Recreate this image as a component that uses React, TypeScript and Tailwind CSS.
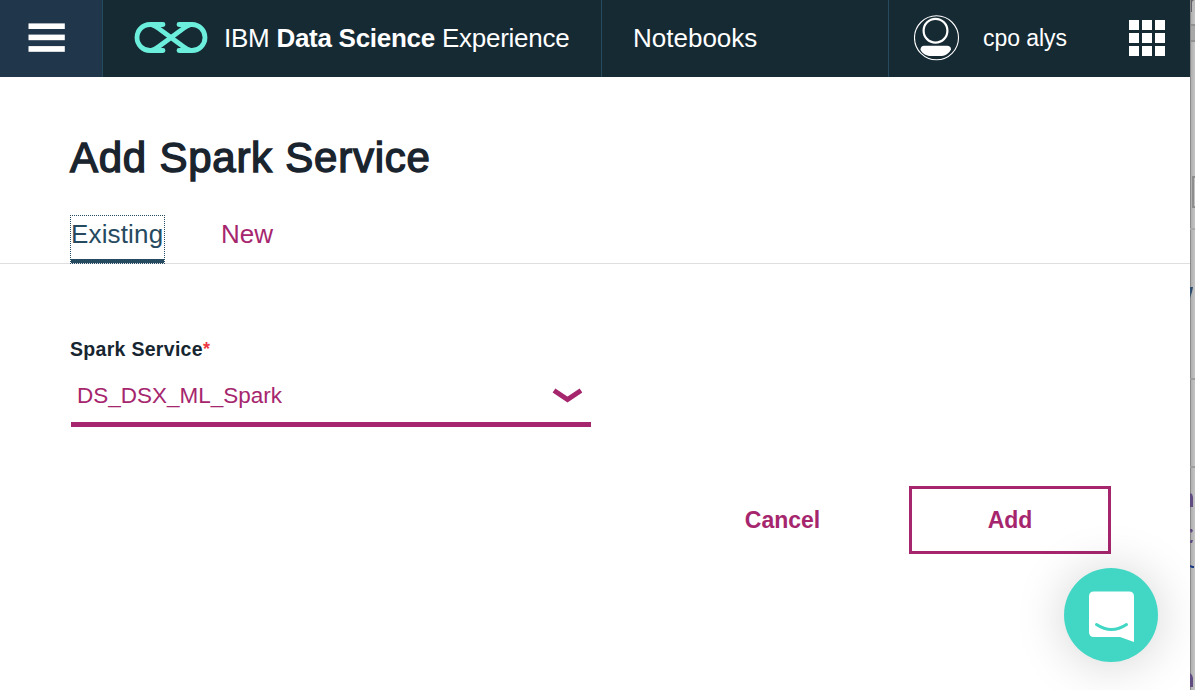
import React from "react";

function MenuIcon() {
  return (
    <svg width="37" height="30" viewBox="0 0 37 30" fill="#fff">
      <rect x="0.5" y="0.4" width="36.3" height="5.6" />
      <rect x="0.5" y="11.6" width="36.3" height="5.6" />
      <rect x="0.5" y="23.1" width="36.3" height="5.7" />
    </svg>
  );
}

function Logo() {
  return (
    <svg width="74" height="32" viewBox="0 0 74 32" fill="none" stroke="#6beedb" strokeWidth="4.8" strokeLinecap="round">
      <path d="M29 2.5H16a13 13 0 0 0 0 26H29" />
      <path d="M45 2.5H58a13 13 0 0 1 0 26H45" />
      <path d="M18 2.8c2.500 0.500 4.500 2 6.500 3.500L49.500 24.700c2 1.500 4 3 6.500 3.500" />
      <path d="M56 2.8c-2.500 0.500-4.500 2-6.500 3.500L24.500 24.700c-2 1.500-4 3-6.500 3.500" />
    </svg>
  );
}

function Avatar() {
  return (
    <svg width="46" height="46" viewBox="0 0 46 46" fill="none">
      <circle cx="22.500" cy="22.800" r="22" stroke="#fff" strokeWidth="1.100" />
      <circle cx="21.500" cy="15.700" r="11.900" stroke="#fff" strokeWidth="2.200" />
      <path fill="#fff" d="M10 30.700H33C35.500 30.700 37 32 37 34.300C36 37 32.500 41 27.500 41H17C12 41 8 38 6.500 34.700C6.500 32 8 30.700 10 30.700Z" />
    </svg>
  );
}

function AppsIcon() {
  return (
    <div className="grid grid-cols-3 gap-[3px]">
      {Array.from({ length: 9 }, (_, i) => (
        <span key={i} className="size-[10px] bg-white" />
      ))}
    </div>
  );
}

function Header() {
  return (
    <header className="flex h-[77px] bg-[#162a34] text-[26px] leading-none text-white">
      <button className="flex w-[103px] items-start border-r border-[#264a60] bg-[#20364b] pt-[23px] pl-7">
        <MenuIcon />
      </button>
      <div className="flex w-[499px] items-center border-r border-[#264a60] pb-[2px] pl-[31px]">
        <Logo />
        <div className="ml-[16px] whitespace-pre tracking-[-0.27px]">
          IBM <span className="font-bold">Data Science</span> Experience
        </div>
      </div>
      <div className="flex w-[287px] items-center border-r border-[#264a60] pb-[2px] pl-[31px]">Notebooks</div>
      <div className="flex flex-1 items-center pb-[2px] pl-[25px]">
        <Avatar />
        <span className="ml-[23px] w-[146px] pt-[2px] text-[23px] tracking-[-0.05px]">cpo alys</span>
        <AppsIcon />
      </div>
    </header>
  );
}

function Tabs() {
  return (
    <nav className="flex h-[49px] border-b border-[#dfdfdf] pl-[70px] text-[26px]">
      <a className="flex h-[49px] w-[95px] flex-col justify-between border border-dotted border-[#264a60] text-[#264a60]">
        <span className="leading-[36px] tracking-[0.15px]">Existing</span>
        <span className="h-1 bg-[#264a60]" />
      </a>
      <a className="ml-[56px] pt-[1px] leading-[36px] text-[#a6266e]">New</a>
    </nav>
  );
}

function ChatLauncher() {
  return (
    <button className="absolute top-[568px] left-[1064px] flex size-[94px] items-start rounded-full bg-[#42d7c5] pt-[23px] pl-[25px] shadow-[0_2px_50px_rgba(0,0,0,0.18)]">
      <svg width="46" height="52" viewBox="0 0 46 52">
        <path fill="#fff" d="M5 0.500H40Q45 0.500 45 5.500V51L31 46H5Q0 46 0 41V5.500Q0 0.500 5 0.500Z" />
        <path d="M7.500 33.500Q22.500 43.500 37.500 33.500" fill="none" stroke="#42d7c5" strokeWidth="3" strokeLinecap="round" />
      </svg>
    </button>
  );
}

function WindowBehind() {
  return (
    <aside className="relative h-[690px] w-[5px] overflow-hidden bg-linear-to-r from-[#aaa] to-[#c5c5c5]">
      <div className="h-3 bg-[#606168] pl-[2px]">
        <div className="h-3 rounded-tl bg-[#bcbcbc]" />
      </div>
      <div className="h-3" />
      <div className="h-[18px] border-y-2 border-[#929292] bg-[#a8a8a8]" />
      <div className="absolute top-0 left-0 h-[690px] w-px bg-[#8a8a8a]" />
      <div className="absolute top-[176px] left-[2px] h-[32px] w-2 border-2 border-[#8e8e8e]" />
      <div className="absolute top-[228px] h-[2px] w-full bg-[#aaa]" />
      <div className="absolute top-[378px] h-[2px] w-full bg-[#9e9e9e]" />
      <div className="absolute top-[466px] h-[2px] w-full bg-[#9e9e9e]" />
      <svg className="absolute inset-0" width="5" height="690" viewBox="0 0 5 690">
        <path fill="#304e70" d="M0 287H3L2 292L0 298Z" />
        <path fill="#614c82" d="M0 493L2 494L3 497V507H0ZM0 529H2L3 531L1 533L0 531ZM0 541L1 540H3L2 543H0ZM0 673L2 675L3 678V687H0Z" />
        <path fill="#1c3c86" d="M0 565L3 566H4V568H2L0 567Z" />
      </svg>
    </aside>
  );
}

export default function App() {
  return (
    <div className="relative flex h-[690px] w-[1195px] overflow-hidden bg-white font-['Liberation_Sans',Arial,sans-serif]">
      <div className="relative h-[690px] w-[1190px] overflow-hidden">
        <Header />
        <main>
          <h1 className="pt-[57px] pl-[70px] text-[42px] leading-[48px] tracking-[0.75px] text-[#1a242e] [-webkit-text-stroke:1.4px_#1a242e]">
            Add Spark Service
          </h1>
          <div className="mt-[33px]">
            <Tabs />
          </div>
          <form className="pt-[73px] pl-[70px]">
            <label className="flex text-[19.5px] leading-[24px] font-bold tracking-[0.3px] text-[#162530]">
              Spark Service<span className="text-[18px] text-[#ed3742]">*</span>
            </label>
            <div className="mt-[21px] ml-[1px] flex h-[45px] w-[520px] justify-between border-b-5 border-[#a6266e] pr-[9px] pl-[6px] text-[22.5px] leading-[28px] text-[#a6266e]">
              <span>DS_DSX_ML_Spark</span>
              <svg className="mt-[4px]" width="30" height="18" viewBox="0 0 30 18" fill="none" stroke="#a6266e" strokeWidth="5">
                <path d="M2 4.500L15.500 13.500L29 4.500" />
              </svg>
            </div>
            <div className="mt-[59px] flex h-[68px] items-center text-[23px] font-bold text-[#a6266e]">
              <button type="button" className="ml-[673px] w-[79px] text-center">Cancel</button>
              <button type="button" className="ml-[87px] h-[68px] w-[202px] border-3 border-[#a6266e]">Add</button>
            </div>
          </form>
        </main>
        <ChatLauncher />
      </div>
      <WindowBehind />
    </div>
  );
}
